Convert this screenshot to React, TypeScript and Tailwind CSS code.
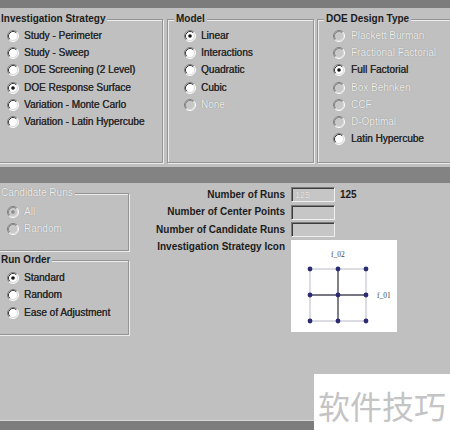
import React from "react";

const GB =
  "relative border border-[#949494] shadow-[inset_1px_1px_0_#ececec,1px_1px_0_#ececec]";
const DIS = "text-[#eeeeee] [text-shadow:0_0_1px_#7a7a7a]";
const TXT = "text-[#2a2a2a] [text-shadow:0.3px_0_0_#2a2a2a]";

function Radio({ checked = false, disabled = false }: { checked?: boolean; disabled?: boolean }) {
  return (
    <svg width="12" height="12" viewBox="0 0 12 12" className="shrink-0">
      <circle cx="6" cy="6" r="5" fill={disabled ? "#c8c8c8" : "#ffffff"} />
      <path d="M2.11 9.89A5.5 5.5 0 0 1 9.89 2.11" fill="none" stroke="#808080" strokeWidth="1" />
      <path d="M9.89 2.11A5.5 5.5 0 0 1 2.11 9.89" fill="none" stroke="#ffffff" strokeWidth="1" />
      <path d="M2.82 9.18A4.5 4.5 0 0 1 9.18 2.82" fill="none" stroke={disabled ? "#8a8a8a" : "#3a3a3a"} strokeWidth="1" />
      <path d="M9.18 2.82A4.5 4.5 0 0 1 2.82 9.18" fill="none" stroke="#dcdcdc" strokeWidth="1" />
      {checked && <circle cx="6" cy="6" r="1.8" fill={disabled ? "#8a8a8a" : "#111111"} />}
    </svg>
  );
}

function Item({
  label,
  checked = false,
  disabled = false,
  h = "h-[17.3px]",
  gap = "gap-[5px]",
}: {
  label: string;
  checked?: boolean;
  disabled?: boolean;
  h?: string;
  gap?: string;
}) {
  return (
    <div className={`flex items-center ${h} ${gap}`}>
      <Radio checked={checked} disabled={disabled} />
      <span className={`whitespace-nowrap leading-[12px] ${disabled ? DIS : TXT}`}>{label}</span>
    </div>
  );
}

function Legend({ children, disabled = false }: { children: React.ReactNode; disabled?: boolean }) {
  return (
    <span
      className={`absolute left-[6px] -top-[7px] px-[2px] bg-[#c0c0c0] leading-[12px] whitespace-nowrap ${
        disabled ? DIS : "font-bold text-[#1c1c1c]"
      }`}
    >
      {children}
    </span>
  );
}

function Field({ value }: { value?: string }) {
  return (
    <div className="w-[44px] h-[15px] shrink-0 bg-[#c6c6c6] border border-t-[#7a7a7a] border-l-[#7a7a7a] border-r-[#efefef] border-b-[#efefef] shadow-[inset_1px_1px_0_#3c3c3c] flex items-center pl-[3px]">
      {value && <span className="text-[9px] leading-[10px] text-[#e6e6e6] [text-shadow:0_0_1px_#9a9a9a]">{value}</span>}
    </div>
  );
}

function StrategyIcon() {
  const xs = [19, 47, 75];
  const ys = [29, 55, 81];
  return (
    <div className="w-[106px] h-[92px] bg-white mt-[1.5px] shrink-0">
      <svg width="106" height="92" viewBox="0 0 106 92">
        <rect x="19" y="29" width="56" height="52" fill="none" stroke="#b9b9c8" strokeWidth="1" />
        <line x1="47" y1="29" x2="47" y2="81" stroke="#4a4a5a" strokeWidth="1.4" />
        <line x1="19" y1="55" x2="75" y2="55" stroke="#4a4a5a" strokeWidth="1.4" />
        {ys.map((y) =>
          xs.map((x) => <circle key={`${x}-${y}`} cx={x} cy={y} r="2.4" fill="#2c2c74" />)
        )}
        <text x="40" y="17" fontSize="7.5" fontFamily="Liberation Serif, serif" fill="#444">
          f_02
        </text>
        <text x="86" y="58" fontSize="7.5" fontFamily="Liberation Serif, serif" fill="#444">
          f_01
        </text>
      </svg>
    </div>
  );
}

function Row({ label, children }: { label: string; children: React.ReactNode }) {
  return (
    <div className="flex items-center h-[17.4px]">
      <span className="w-[129px] text-right font-bold text-[#1c1c1c] leading-[12px] whitespace-nowrap">{label}</span>
      <div className="ml-[6px] flex items-center gap-[5px]">{children}</div>
    </div>
  );
}

export default function App() {
  return (
    <div className="relative w-[450px] h-[442px] overflow-hidden bg-white font-['Liberation_Sans',Arial,sans-serif] text-[10px]">
      {/* top dark bar */}
      <div className="h-[8px] bg-[#7c7c7c]" />

      {/* upper panel */}
      <div className="flex h-[159px] bg-[#c0c0c0] pt-[11px]">
        <div className={`${GB} ml-[-8px] w-[171px] h-[144px] shrink-0 pl-[14px] pt-[7px]`}>
          <Legend>Investigation Strategy</Legend>
          <Item label="Study - Perimeter" />
          <Item label="Study - Sweep" />
          <Item label="DOE Screening (2 Level)" />
          <Item label="DOE Response Surface" checked />
          <Item label="Variation - Monte Carlo" />
          <Item label="Variation - Latin Hypercube" />
        </div>
        <div className={`${GB} ml-[4px] w-[147px] h-[144px] shrink-0 pl-[16px] pt-[7px]`}>
          <Legend>Model</Legend>
          <Item label="Linear" checked />
          <Item label="Interactions" />
          <Item label="Quadratic" />
          <Item label="Cubic" />
          <Item label="None" disabled />
        </div>
        <div className={`${GB} ml-[3px] w-[143px] h-[144px] shrink-0 pl-[15px] pt-[7px]`}>
          <Legend>DOE Design Type</Legend>
          <Item label="Plackett Burman" disabled gap="gap-[6px]" />
          <Item label="Fractional Factorial" disabled gap="gap-[6px]" />
          <Item label="Full Factorial" checked gap="gap-[6px]" />
          <Item label="Box Behnken" disabled gap="gap-[6px]" />
          <Item label="CCF" disabled gap="gap-[6px]" />
          <Item label="D-Optimal" disabled gap="gap-[6px]" />
          <Item label="Latin Hypercube" gap="gap-[6px]" />
        </div>
      </div>

      {/* middle dark bar */}
      <div className="h-[16px] bg-[#838383]" />

      {/* lower panel */}
      <div className="flex h-[237px] bg-[#c0c0c0]">
        <div className="ml-[-8px] w-[137px] shrink-0 pt-[10px] flex flex-col gap-[9px]">
          <div className={`${GB} h-[58px] pl-[14px] pt-[9.5px]`}>
            <Legend disabled>Candidate Runs</Legend>
            <Item label="All" checked disabled h="h-[17px]" />
            <Item label="Random" disabled h="h-[17px]" />
          </div>
          <div className={`${GB} h-[75px] pl-[14px] pt-[8.5px]`}>
            <Legend>Run Order</Legend>
            <Item label="Standard" checked h="h-[17.3px]" />
            <Item label="Random" h="h-[17.3px]" />
            <Item label="Ease of Adjustment" h="h-[17.3px]" />
          </div>
        </div>

        <div className="ml-[27px] pt-[3.3px] flex flex-col">
          <Row label="Number of Runs">
            <Field value="125" />
            <span className="font-bold text-[#1c1c1c] leading-[12px]">125</span>
          </Row>
          <Row label="Number of Center Points">
            <Field />
          </Row>
          <Row label="Number of Candidate Runs">
            <Field />
          </Row>
          <div className="flex items-start">
            <span className="w-[129px] h-[17.4px] flex items-center justify-end font-bold text-[#1c1c1c] leading-[12px] whitespace-nowrap">
              Investigation Strategy Icon
            </span>
            <div className="ml-[6px]">
              <StrategyIcon />
            </div>
          </div>
        </div>
      </div>

      {/* bottom bar */}
      <div className="h-[1px] bg-[#d6d6d6]" />
      <div className="h-[9px] bg-[#7d7d7d]" />
      <div className="h-[12px] bg-white" />

      {/* watermark */}
      <div className="absolute left-[314px] top-[374px] w-[136px] h-[68px] bg-white pl-[4px] pt-[14px]">
        <span className="block text-[32px] leading-[34px] text-[#c4c4c4] font-['Noto_Sans_CJK_SC',sans-serif] whitespace-nowrap">
          软件技巧
        </span>
      </div>
    </div>
  );
}
